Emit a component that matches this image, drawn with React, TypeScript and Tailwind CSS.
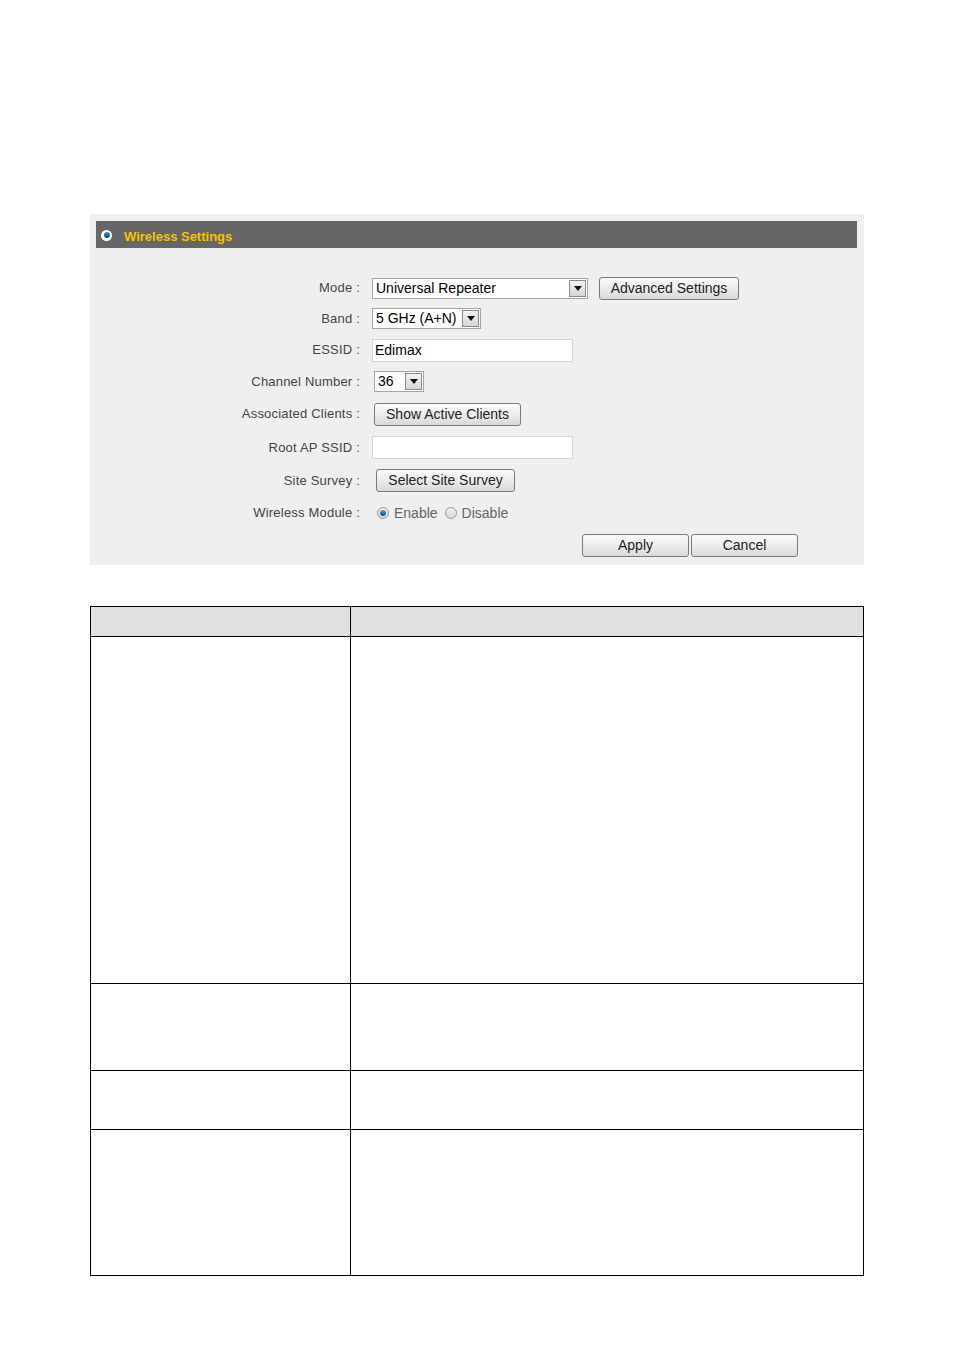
import React from 'react';

const font = { fontFamily: '"Liberation Sans", Arial, sans-serif' };

function Label({ children }: { children: React.ReactNode }) {
  return <div className="w-[270px] shrink-0 pr-[6px] text-right text-[13px] tracking-[0.2px] text-[#444]">{children}</div>;
}

function Arrow() {
  return (
    <div className="flex h-[17px] w-[17px] items-center justify-center border border-[#8a8a8a] bg-gradient-to-b from-[#f4f4f4] to-[#d6d6d6]">
      <svg width="8" height="5" viewBox="0 0 8 5">
        <path d="M0 0h8L4 5z" fill="#111" />
      </svg>
    </div>
  );
}

function Select({ value, width }: { value: string; width: string }) {
  return (
    <div className={`flex h-[21px] items-center justify-between border border-[#a5a5a5] bg-white pl-[3px] pr-[1px] text-[14px] text-black ${width}`}>
      <span>{value}</span>
      <Arrow />
    </div>
  );
}

function Button({ children, className }: { children: React.ReactNode; className?: string }) {
  return (
    <div
      className={`flex h-[23px] items-center justify-center rounded-[3px] border border-[#7a7a7a] bg-gradient-to-b from-[#fbfbfb] via-[#ececec] to-[#d9d9d9] text-[14px] text-[#222] ${className ?? ''}`}
    >
      {children}
    </div>
  );
}

function Radio({ checked }: { checked?: boolean }) {
  return (
    <span className="flex h-[12px] w-[12px] items-center justify-center rounded-full border border-[#9a9a9a] bg-gradient-to-b from-[#f0f0f0] to-[#d8d8d8]">
      {checked && <span className="h-[6px] w-[6px] rounded-full bg-gradient-to-b from-[#4aa3df] to-[#0b4f8a]" />}
    </span>
  );
}

export default function App() {
  return (
    <div className="min-h-[1350px] w-[954px] bg-white" style={font}>
      <div className="h-[214px]" />

      {/* settings panel */}
      <div className="mx-[90px] h-[351px] bg-[#efefef] pl-[6px] pr-[7px] pt-[7px]">
        <div className="flex h-[27px] items-center bg-[#666666] pl-[5px] pt-[5px]">
          <span className="mb-[4px] flex h-[11px] w-[11px] items-center justify-center rounded-full bg-white">
            <span className="h-[6px] w-[6px] rounded-full bg-gradient-to-b from-[#3b8fd0] to-[#0a3f7a]" />
          </span>
          <span className="ml-[12px] text-[13px] font-bold text-[#f5c400]">Wireless Settings</span>
        </div>

        <div className="mt-[25px] flex flex-col">
          <div className="flex h-[30px] items-center">
            <Label>Mode :</Label>
            <div className="ml-[6px] flex items-center">
              <Select value="Universal Repeater" width="w-[216px]" />
              <Button className="ml-[11px] w-[140px]">Advanced Settings</Button>
            </div>
          </div>
          <div className="flex h-[31px] items-center">
            <Label>Band :</Label>
            <div className="ml-[6px]">
              <Select value="5 GHz (A+N)" width="w-[109px]" />
            </div>
          </div>
          <div className="flex h-[32px] items-center">
            <Label>ESSID :</Label>
            <div className="ml-[6px] flex h-[23px] w-[201px] items-center border border-[#d4d4d4] bg-white pl-[2px] text-[14px] text-black">
              Edimax
            </div>
          </div>
          <div className="flex h-[31px] items-center">
            <Label>Channel Number :</Label>
            <div className="ml-[8px]">
              <Select value="36" width="w-[50px]" />
            </div>
          </div>
          <div className="flex h-[34px] items-center">
            <Label>Associated Clients :</Label>
            <Button className="ml-[8px] w-[147px]">Show Active Clients</Button>
          </div>
          <div className="flex h-[33px] items-center">
            <Label>Root AP SSID :</Label>
            <div className="ml-[6px] h-[23px] w-[201px] border border-[#d4d4d4] bg-white" />
          </div>
          <div className="flex h-[33px] items-center">
            <Label>Site Survey :</Label>
            <Button className="ml-[10px] w-[139px]">Select Site Survey</Button>
          </div>
          <div className="flex h-[32px] items-center">
            <Label>Wireless Module :</Label>
            <div className="ml-[11px] flex items-center text-[14px] text-[#666]">
              <Radio checked />
              <span className="ml-[5px]">Enable</span>
              <span className="ml-[7px]">
                <Radio />
              </span>
              <span className="ml-[5px]">Disable</span>
            </div>
          </div>
          <div className="flex h-[32px] items-center">
            <div className="w-[486px] shrink-0" />
            <Button className="w-[107px]">Apply</Button>
            <Button className="ml-[2px] w-[107px]">Cancel</Button>
          </div>
        </div>
      </div>

      <div className="h-[41px]" />

      {/* description table */}
      <table className="mx-[90px] w-[774px] border-collapse">
        <tbody>
          <tr className="h-[30px] bg-[#e0e0e0]">
            <td className="w-[260px] border border-black" />
            <td className="border border-black" />
          </tr>
          <tr className="h-[347px]">
            <td className="border border-black" />
            <td className="border border-black" />
          </tr>
          <tr className="h-[87px]">
            <td className="border border-black" />
            <td className="border border-black" />
          </tr>
          <tr className="h-[59px]">
            <td className="border border-black" />
            <td className="border border-black" />
          </tr>
          <tr className="h-[146px]">
            <td className="border border-black" />
            <td className="border border-black" />
          </tr>
        </tbody>
      </table>
    </div>
  );
}
